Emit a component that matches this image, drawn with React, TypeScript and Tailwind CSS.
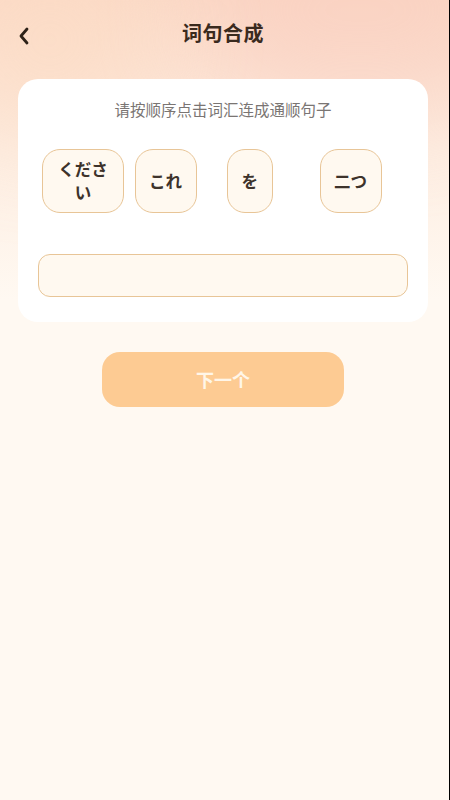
import React from "react";

const words = ["ください", "これ", "を", "二つ"];

export default function App() {
  return (
    <div
      className="relative w-[450px] h-[800px] overflow-hidden bg-[#fff9f2]"
      style={{ fontFamily: '"Noto Sans CJK SC", "Noto Sans CJK JP", "Noto Sans", sans-serif' }}
    >
      <div className="absolute inset-x-0 top-0 h-[300px] bg-gradient-to-b from-[#fbdac8] via-[#fdede1] to-[#fff9f2]" />
      <div className="absolute -top-[90px] right-[-70px] w-[320px] h-[200px] rounded-full bg-[#f9cbbd] opacity-50 blur-[50px]" />
      <div className="absolute -top-[60px] left-[-60px] w-[220px] h-[200px] rounded-full bg-[#fcdcc4] opacity-60 blur-[50px]" />
      <div className="absolute right-0 top-0 h-full w-[1px] bg-black" />
      <div className="relative">
        <div className="flex h-[66px] w-[446px] items-center justify-center relative">
          <svg className="absolute left-[17px] top-[27px]" width="14" height="18" viewBox="0 0 14 18">
            <path d="M10 2 L4 9 L10 16" fill="none" stroke="#2e2218" strokeWidth="2.8" strokeLinecap="round" strokeLinejoin="round" />
          </svg>
          <span className="text-[20px] font-bold text-[#3a2a1e] tracking-[0.5px]">词句合成</span>
        </div>
        <div className="ml-[18px] w-[410px] mt-[13px] rounded-[20px] bg-white px-[20px] pt-[19px] pb-[25px]">
          <div className="text-center text-[15.5px] text-[#7a7573] leading-[22px]">请按顺序点击词汇连成通顺句子</div>
          <div className="mt-[29px] grid grid-cols-4">
            {words.map((w) => (
              <div key={w} className="pl-[4px] flex">
                <div className="h-[64px] max-w-[82px] px-[13.5px] flex items-center justify-center text-center rounded-[18px] border-[1.5px] border-[#e8c597] bg-[#fff9f0] text-[16.5px] font-semibold leading-[23px] text-[#3d332b]">
                  {w}
                </div>
              </div>
            ))}
          </div>
          <div className="mt-[41px] h-[43px] rounded-[12px] border-[1.5px] border-[#e8c597] bg-[#fff9f0]" />
        </div>
        <div className="mt-[30px] ml-[102px] w-[242px] h-[55px] rounded-[18px] bg-[#fdcb93] flex items-center justify-center text-[18px] font-bold text-[#fff6e8]">
          下一个
        </div>
      </div>
    </div>
  );
}
